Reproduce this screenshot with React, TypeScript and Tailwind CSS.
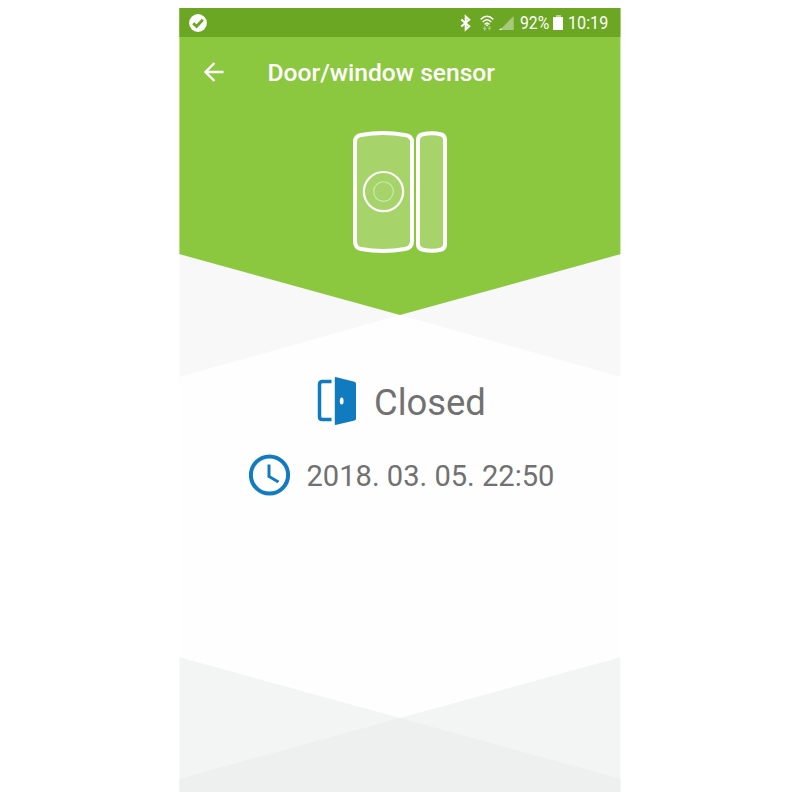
import React from "react";

function CheckBadge() {
  return (
    <svg width="18" height="18" viewBox="0 0 18 18">
      <circle cx="9" cy="9" r="8.9" fill="#fff" />
      <path d="M4.2 9.2 7.6 12.4 13.8 5.8" fill="none" stroke="#6ca724" strokeWidth="2.9" />
    </svg>
  );
}

function StatusIcons() {
  return (
    <svg width="55" height="18" viewBox="0 0 55 18">
      <path d="M1.300 5.400 9.200 12.200 5.700 15.400V2.600L9.200 5.800 1.300 12.600" fill="none" stroke="#fff" strokeWidth="2" />
      <g fill="none" stroke="#fff" strokeWidth="1.500">
        <path d="M20.700 5.400Q27 -.8 33.300 5.400" />
        <path d="M22.700 8Q27 3.400 31.300 8" />
        <path d="M24.600 10.400Q27 7.600 29.400 10.400" />
      </g>
      <circle cx="27" cy="11.300" r="1" fill="#fff" />
      <path d="M22.800 15l1.900-3 1.900 3zM23.900 14.500h1.600v2h-1.600zM27.500 13.500l1.900 3 1.900-3zM28.600 12h1.600v2h-1.600z" fill="#fff" opacity=".45" />
      <path d="M53.700 2V16H40z" fill="#fff" opacity=".4" />
      <path d="M41.400 13.700V16H39.100z" fill="#fff" />
    </svg>
  );
}

function BackArrow() {
  return (
    <svg width="20" height="20" viewBox="0 0 20 20" fill="none" stroke="#fff" strokeWidth="2.3">
      <path d="M19.5 10H2M10.5 1 1.500 10l9 9" />
    </svg>
  );
}

function Sensor() {
  return (
    <svg width="96" height="124" viewBox="0 0 96 124">
      <g fill="#a6d46a" stroke="#fff" strokeWidth="4">
        <path d="M3 12Q3 6 9 5Q31 1 53 5Q60 6 60 12V111Q60 118 53 119Q31 123 9 119Q3 118 3 111Z" />
        <path d="M66 10Q66 5.500 70 4.500Q80 2 89.500 4.500Q93 5.500 93 10V114Q93 118.500 89.500 119.500Q80 122 70 119.500Q66 118.500 66 114Z" />
      </g>
      <circle cx="31.500" cy="61.600" r="19.600" fill="none" stroke="#fff" strokeWidth="2.200" />
      <circle cx="31.500" cy="61.600" r="9.800" fill="none" stroke="#d0e9b0" strokeWidth="1.100" />
    </svg>
  );
}

function Door() {
  return (
    <svg width="40" height="50" viewBox="0 0 40 50">
      <path d="M14.500 5.500H5.500Q2.500 5.500 2.500 8.700V40.500Q2.500 43.600 5.500 43.600H14.500" fill="none" stroke="#117bbf" strokeWidth="3.500" />
      <path d="M18.500 1Q17.800 1 17.800 2V48Q17.800 49 18.500 49L37.500 44.400Q39 44 39 42.500V7.800Q39 6.300 37.500 5.800Z" fill="#117bbf" />
      <ellipse cx="24.700" cy="25" rx="1.900" ry="3.600" fill="#fff" />
    </svg>
  );
}

function Clock() {
  return (
    <svg width="42" height="42" viewBox="0 0 42 42" fill="none" stroke="#117bbf">
      <circle cx="20.500" cy="21" r="18.600" strokeWidth="4" />
      <path d="M20 10.500V22.500L29.500 28" strokeWidth="3" />
    </svg>
  );
}

export default function App() {
  return (
    <div className="h-[800px] w-[800px] overflow-hidden bg-white pt-2 pl-[179px] font-['Roboto',sans-serif]">
      <main className="flex h-[784px] w-[442px] flex-col bg-[#fefefe] [clip-path:inset(0_0.6px_0_0.4px)]">
        <div className="h-[369px] shrink-0 bg-[#f8f8f8] [clip-path:polygon(0_0,100%_0,100%_369px,50%_307px,0_369px)]">
          <header className="flex h-[307px] flex-col items-center bg-[#8cc83f] [clip-path:polygon(0_0,100%_0,100%_246px,50%_307px,0_246px)]">
            <div className="flex h-[29px] w-full shrink-0 items-center bg-[#6ca724] pr-3 pl-[10px] text-white">
              <CheckBadge />
              <div className="ml-auto flex items-center">
                <StatusIcons />
                <span className="ml-[5px] w-[30px] text-[19px] leading-none whitespace-nowrap">
                  <span className="inline-block origin-left scale-x-[0.83]">92%</span>
                </span>
                <span className="ml-[3px] flex flex-col items-center">
                  <span className="h-[2px] w-[5px] bg-[#b5d392]" />
                  <span className="h-[13px] w-[10px] bg-white" />
                </span>
                <span className="ml-[5px] w-[41px] text-[19px] leading-none whitespace-nowrap">
                  <span className="inline-block origin-left scale-x-[0.85]">10:19</span>
                </span>
              </div>
            </div>
            <div className="flex h-[70px] w-full shrink-0 items-center pl-[25px]">
              <BackArrow />
              <h1 className="ml-[43.5px] pt-[2px] text-[24.6px] leading-none font-medium whitespace-nowrap text-white">Door/window sensor</h1>
            </div>
            <div className="mt-[23px]">
              <Sensor />
            </div>
          </header>
        </div>
        <section className="-mt-[1px] flex flex-col text-[#717171]">
          <div className="flex h-[50px] items-center pl-[138px]">
            <Door />
            <span className="ml-[17px] pt-[5px] text-[36.4px] leading-none whitespace-nowrap">Closed</span>
          </div>
          <div className="mt-[28px] flex h-[42px] items-center pl-[70px]">
            <Clock />
            <time className="ml-[15.5px] pt-[3px] text-[29.1px] leading-none whitespace-nowrap">2018. 03. 05. 22:50</time>
          </div>
        </section>
        <footer className="mt-auto h-[135px] bg-[#f3f5f5] [clip-path:polygon(0_0,50%_61px,100%_0,100%_100%,0_100%)]">
          <div className="h-full bg-[#eef0f0] [clip-path:polygon(50%_61px,100%_122px,100%_100%,0_100%,0_122px)]" />
        </footer>
      </main>
    </div>
  );
}
